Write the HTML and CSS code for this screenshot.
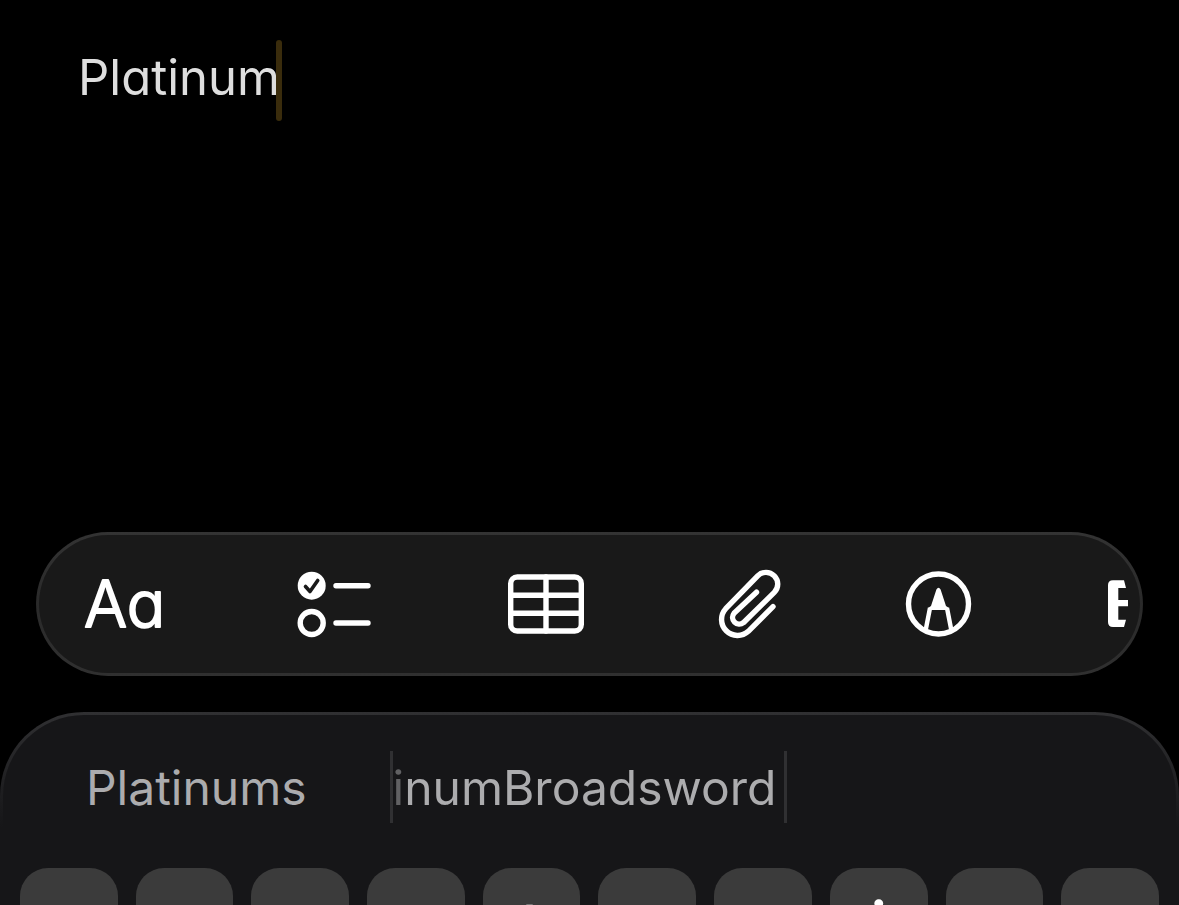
FILE: index.html
```
<!DOCTYPE html>
<html lang="en">
<head>
    <meta charset="UTF-8">
    <meta name="viewport" content="width=device-width, initial-scale=1.0">
    <title>Notes</title>
    <link rel="stylesheet" href="styles.css">
</head>
<body>
    <main class="note">
        <input class="note_input" type="text" value="Platinum" aria-label="Note">
        <span class="caret"></span>
    </main>

    <div class="toolbar">
        <div class="tools">
            <button class="tool" aria-label="Text format">
                <svg width="84" height="72" viewBox="0 0 84 72">
                    <text class="format_text" x="0" y="59">Aa</text>
                </svg>
            </button>
            <button class="tool" aria-label="Checklist">
                <svg width="84" height="72" viewBox="0 0 84 72">
                    <circle cx="19.7" cy="17.7" r="14" fill="#fff"/>
                    <path d="M13.5 18.5 L18 23.5 L25.7 12.5" fill="none" stroke="#191919" stroke-width="3.6" stroke-linecap="round" stroke-linejoin="round"/>
                    <circle class="line" cx="19.7" cy="55" r="11.5"/>
                    <path class="line" d="M44 17.7 H76 M44 55 H76"/>
                </svg>
            </button>
            <button class="tool" aria-label="Table">
                <svg width="92" height="72" viewBox="0 0 92 72">
                    <rect class="line" x="10.7" y="9" width="70.6" height="54" rx="6.5"/>
                    <path class="line" d="M46 9 V63 M11 27.3 H81 M11 45.3 H81"/>
                </svg>
            </button>
            <button class="tool" aria-label="Attachment">
                <svg width="65" height="72" viewBox="0 0 65 72">
                    <path class="line" d="M57 38.6 L32.3 63.3 A16 16 0 0 1 9.7 40.7 L41.7 7.8 A11.7 11.7 0 0 1 58.3 24.4 L27.4 54.7 A6.7 6.7 0 0 1 18 45.3 L40.5 24.2"/>
                </svg>
            </button>
            <button class="tool" aria-label="Markup">
                <svg width="78" height="72" viewBox="0 0 78 72">
                    <circle class="line" cx="33.5" cy="36" r="30"/>
                    <path d="M31.4 21.5 Q33.5 18 35.6 21.5 L41 38 L44 40 V42 H23 V40 L26 38 Z" fill="#fff"/>
                    <path d="M25 40 L20.7 62 M42 40 L46.3 62" fill="none" stroke="#fff" stroke-width="4.4" stroke-linejoin="round"/>
                </svg>
            </button>
            <button class="tool" aria-label="More">
                <svg width="76" height="72" viewBox="0 0 76 72">
                    <path d="M6 12.3 H17 L19 20 H11.3 V32 H30 V38.3 H11.3 V51.7 H19 L17 59 H6 Q1 59 1 54 V17 Q1 12.3 6 12.3 Z" fill="#fff"/>
                </svg>
            </button>
        </div>
    </div>

    <div class="keyboard">
        <div class="suggestions">
            <button class="suggestion">Platinums</button>
            <button class="suggestion suggestion_long"><span class="fade">inumBroadsword</span></button>
            <button class="suggestion" aria-label="Empty suggestion"></button>
        </div>
        <div class="keys">
            <button class="key">q</button>
            <button class="key">w</button>
            <button class="key">e</button>
            <button class="key">r</button>
            <button class="key">t</button>
            <button class="key">y</button>
            <button class="key">u</button>
            <button class="key">i</button>
            <button class="key">o</button>
            <button class="key">p</button>
        </div>
    </div>
</body>
</html>
```
FILE: styles.css
```
* {
    box-sizing: border-box;
}

body {
    margin: 0;
    height: 100vh;
    overflow: hidden;
    display: flex;
    flex-direction: column;
    background-color: #000;
    font-family: Inter, "Liberation Sans", sans-serif;
}

button {
    margin: 0;
    padding: 0;
    border: none;
    background: none;
    color: inherit;
    font: inherit;
    cursor: pointer;
}

/* note */
.note {
    flex: 1;
    display: flex;
    align-items: flex-start;
    padding: 40px 78px;
}

.note_input {
    field-sizing: content;
    height: 74px;
    padding: 0;
    border: none;
    outline: none;
    background: none;
    color: #dedede;
    font-family: inherit;
    font-size: 49px;
    font-feature-settings: "cv11";
}

.caret {
    width: 6px;
    height: 81px;
    margin-left: -4px;
    border-radius: 3px;
    background-color: #3a2c0c;
}

/* toolbar */
.toolbar {
    height: 144px;
    margin: 0 36px 36px;
    padding: 0 12px 0 45px;
    border: 3px solid transparent;
    border-radius: 72px;
    background: linear-gradient(#191919, #191919) padding-box,
                linear-gradient(#333, #2a2a2a 50%, #303030) border-box;
}

.tools {
    height: 100%;
    display: flex;
    align-items: center;
    gap: 124px;
    overflow: hidden;
}

.tool {
    flex: none;
}

.tool svg {
    display: block;
}

.line {
    fill: none;
    stroke: #fff;
    stroke-width: 5.4;
    stroke-linecap: round;
    stroke-linejoin: round;
}

.format_text {
    fill: #fff;
    stroke: #fff;
    stroke-width: 2;
    stroke-linejoin: round;
    font-size: 64px;
    font-weight: 300;
    font-feature-settings: "cv11";
}

/* keyboard */
.keyboard {
    height: 193px;
    overflow: hidden;
    border: 3px solid transparent;
    border-bottom: none;
    border-radius: 84px 84px 0 0;
    background: linear-gradient(#161618, #161618) padding-box,
                linear-gradient(#303032, #161618 60%) border-box;
}

.suggestions {
    display: grid;
    grid-template-columns: 388fr 395fr 390fr;
    height: 72px;
    margin: 36px 0 45px;
    color: #acacae;
    font-size: 48px;
}

.suggestion_long {
    display: flex;
    justify-content: flex-end;
    align-items: center;
    padding-right: 8px;
    border: solid #303032;
    border-width: 0 3px;
}

.fade {
    mask-image: linear-gradient(to right, rgba(0, 0, 0, 0.5) 12px, #000 14px);
}

.keys {
    display: grid;
    grid-template-columns: repeat(10, 1fr);
    gap: 18px;
    padding: 0 17px;
}

.key {
    height: 116px;
    border-radius: 28px;
    background-color: #3b3b3b;
    color: #fff;
    font-size: 72px;
}
```
